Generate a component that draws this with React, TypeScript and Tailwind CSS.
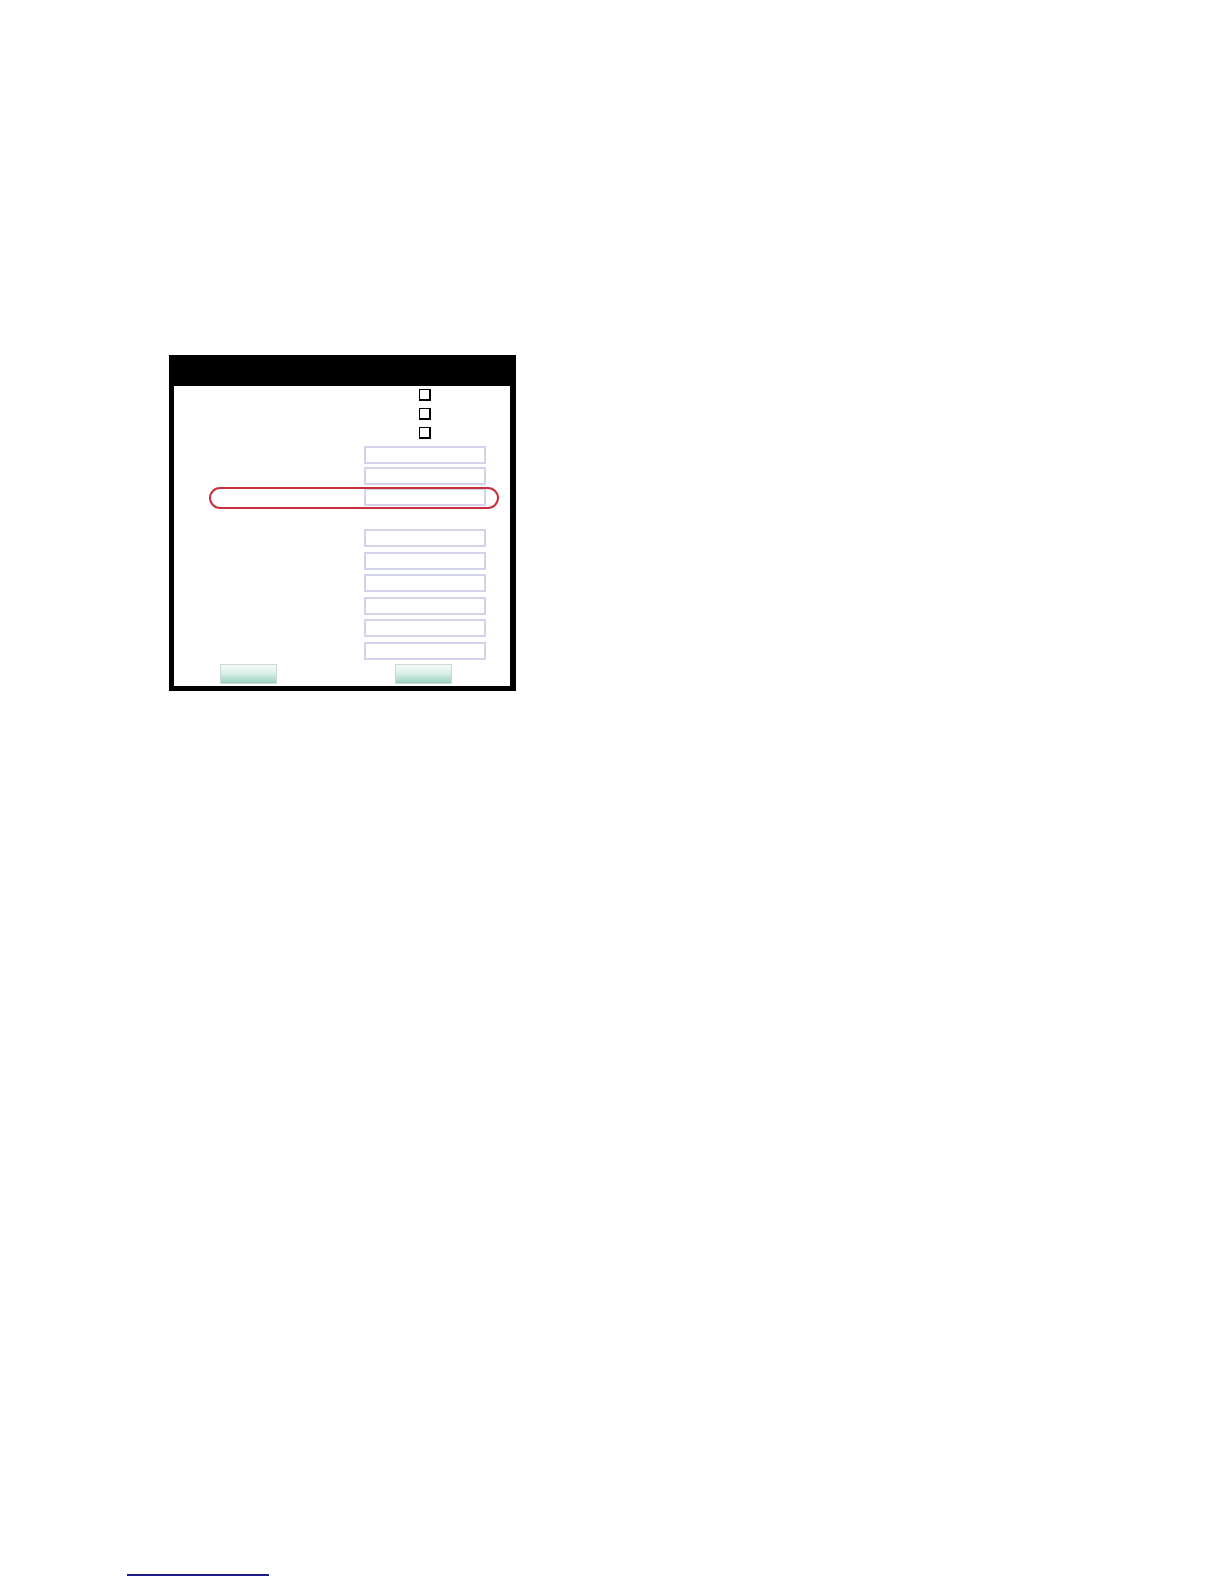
const checkboxes = [0, 1, 2];
const topInputs = [0, 1, 2];
const bottomInputs = [0, 1, 2, 3, 4, 5];

function Field({ circled = false }: { circled?: boolean }) {
  return (
    <div className="relative h-[18px]">
      <div className="ml-[190px] h-[18px] w-[122px] border-2 border-[#d2d2ea] bg-white" />
      {circled && (
        <div className="absolute left-[35px] top-[-1px] h-[22px] w-[290px] rounded-full border-2 border-[#c7303d]" />
      )}
    </div>
  );
}

function Button({ offset }: { offset: string }) {
  return (
    <div
      className={`${offset} h-[20px] w-[57px] border border-[#cbd9d5] bg-gradient-to-b from-[#f6fcfa] via-[#d6eee7] to-[#9acfc0]`}
    />
  );
}

export default function App() {
  return (
    <div className="min-h-[1584px] w-[1224px] bg-white pl-[169px] pt-[355px]">
      <div className="flex h-[336px] w-[347px] flex-col border-b-[5px] border-l-[5px] border-r-[6px] border-black bg-white">
        <div className="h-[31px] shrink-0 bg-black" />
        <div className="flex flex-1 flex-col pt-[3px]">
          <div className="flex flex-col gap-[7px]">
            {checkboxes.map((i) => (
              <div
                key={i}
                className="ml-[245px] h-[12px] w-[12px] border-[1.5px] border-b-[2.5px] border-r-[2.5px] border-black bg-white"
              />
            ))}
          </div>
          <div className="mt-[7px] flex flex-col gap-[3px]">
            {topInputs.map((i) => (
              <Field key={i} circled={i === 2} />
            ))}
          </div>
          <div className="mt-[23px] flex flex-col gap-[4.6px]">
            {bottomInputs.map((i) => (
              <Field key={i} />
            ))}
          </div>
          <div className="mt-[4px] flex">
            <Button offset="ml-[46px]" />
            <Button offset="ml-[118px]" />
          </div>
        </div>
      </div>
      <div className="ml-[-42px] mt-[883px] h-[2px] w-[142px] bg-[#1c1c8a]" />
    </div>
  );
}
